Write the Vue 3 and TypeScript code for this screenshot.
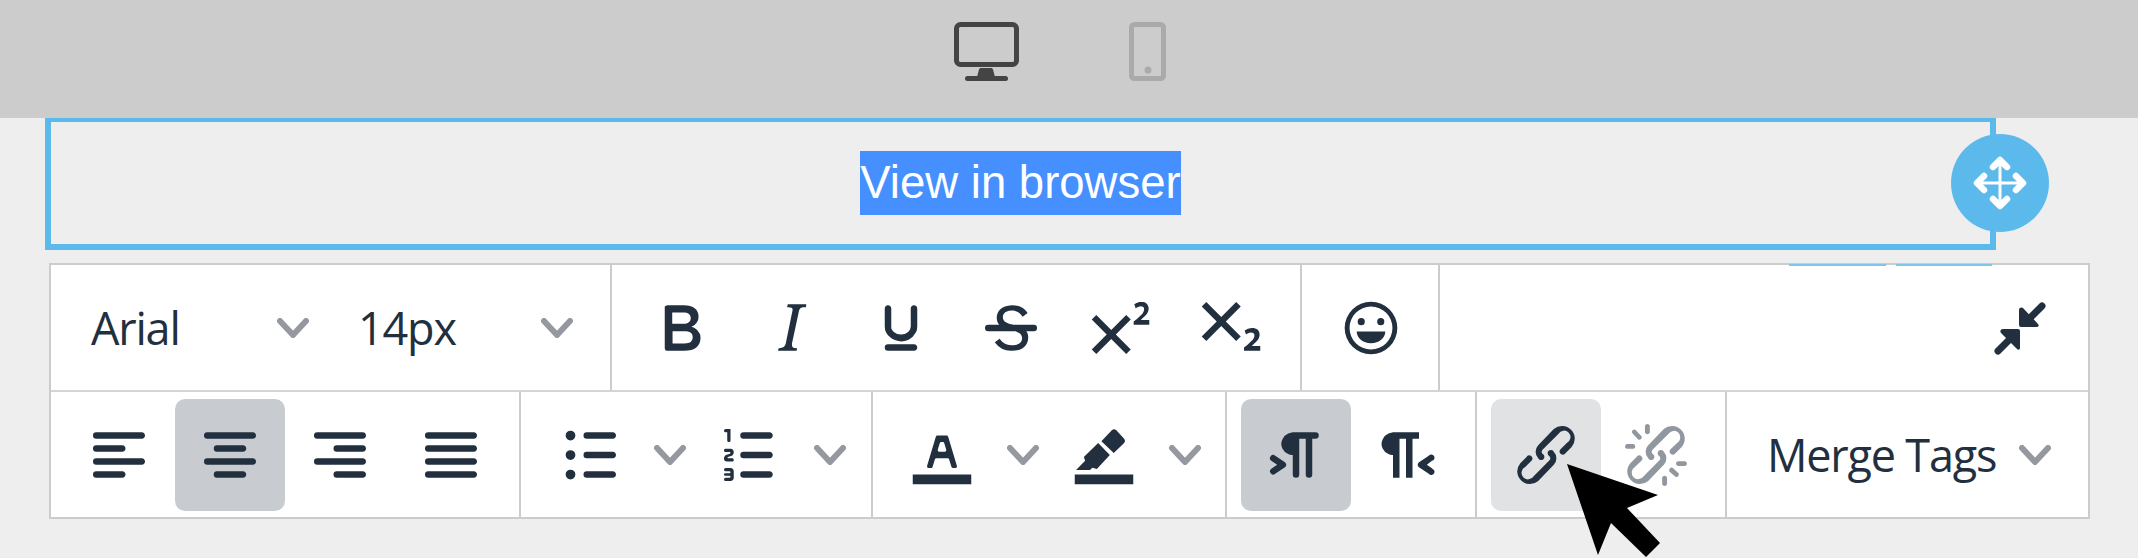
<template>
  <div class="page">
    <!-- Device switcher -->
    <div class="topbar">
      <svg class="device" width="65" height="59" viewBox="0 0 65 59" fill="#444">
        <rect x="2.500" y="2.500" width="60" height="40" rx="4" fill="none" stroke="#444" stroke-width="5" />
        <path d="M27 46h10c1 0 1.500.5 2 1.500l2 7.500H23l2-7.500c.5-1 1-1.500 2-1.500z" />
        <rect x="11" y="54" width="43" height="5" rx="2.500" />
      </svg>
      <svg class="device" width="37" height="59" viewBox="0 0 37 59">
        <rect x="2.500" y="2.500" width="32" height="54" rx="3" fill="none" stroke="#aaa" stroke-width="5" />
        <circle cx="19" cy="48" r="3.500" fill="#aaa" />
      </svg>
    </div>

    <!-- Selected block -->
    <div class="block">
      <span class="selected-text">View in browser</span>
      <div class="handle">
        <svg width="54" height="54" viewBox="0 0 54 54" fill="none" stroke="#fff" stroke-linecap="round" stroke-linejoin="round">
          <path d="M27 5v44M5 27h44" stroke-width="3" />
          <path d="M20 11l7-7 7 7M20 43l7 7 7-7M11 20l-7 7 7 7M43 20l7 7-7 7" stroke-width="6.500" />
        </svg>
      </div>
    </div>

    <!-- Editor toolbar -->
    <div class="toolbar">
      <div class="row">
        <div class="group">
          <div class="select font-select">
            <span>Arial</span>
            <svg class="chevron" viewBox="0 0 32 20"><path d="M3 3l13 14L29 3" /></svg>
          </div>
          <div class="select size-select">
            <span>14px</span>
            <svg class="chevron" viewBox="0 0 32 20"><path d="M3 3l13 14L29 3" /></svg>
          </div>
        </div>
        <div class="group">
          <div v-for="name in formatIcons" :key="name" class="btn">
            <svg class="icon" viewBox="0 0 24 24"><path :d="icons[name]" /></svg>
          </div>
        </div>
        <div class="group emoji-group">
          <div class="btn">
            <svg class="icon" viewBox="0 0 24 24"><path fill-rule="evenodd" :d="icons.emoji" /></svg>
          </div>
        </div>
        <div class="group group-last group-end">
          <span class="ghost-line ghost-a"></span>
          <span class="ghost-line ghost-b"></span>
          <div class="btn">
            <svg class="icon" viewBox="0 0 78 78">
              <path d="M48 29l12-12" stroke="#222f3e" stroke-width="7" stroke-linecap="round" />
              <path d="M37 21v15a2 2 0 0 0 2 2h16c2 0 2-2 1-3L41 19c-1-1-4-1-4 2z" />
              <path d="M29 49L16 62" stroke="#222f3e" stroke-width="7" stroke-linecap="round" />
              <path d="M21 40h15a2 2 0 0 1 2 2v17c0 2-2 2-3 1L19 44c-1-1-1-4 2-4z" />
            </svg>
          </div>
        </div>
      </div>

      <div class="row">
        <div class="group align-group">
          <div v-for="item in alignItems" :key="item.name" class="btn btn-wide" :class="{ active: item.active }">
            <svg class="icon" viewBox="0 0 24 24"><path :d="icons[item.name]" /></svg>
          </div>
        </div>
        <div class="group list-group">
          <div v-for="name in listIcons" :key="name" class="split">
            <div class="btn">
              <svg class="icon" viewBox="0 0 24 24"><path :d="icons[name]" /></svg>
            </div>
            <div class="split-arrow">
              <svg class="chevron" viewBox="0 0 32 20"><path d="M3 3l13 14L29 3" /></svg>
            </div>
          </div>
        </div>
        <div class="group">
          <div v-for="name in colorIcons" :key="name" class="split">
            <div class="btn">
              <svg class="icon" viewBox="0 0 24 24"><path :d="icons[name]" /></svg>
            </div>
            <div class="split-arrow wide-arrow">
              <svg class="chevron" viewBox="0 0 32 20"><path d="M3 3l13 14L29 3" /></svg>
            </div>
          </div>
        </div>
        <div class="group">
          <div class="btn active">
            <svg class="icon" viewBox="0 0 24 24"><path :d="icons.ltr" /></svg>
          </div>
          <div class="btn">
            <svg class="icon" viewBox="0 0 24 24"><path :d="icons.rtl" /></svg>
          </div>
        </div>
        <div class="group">
          <div class="btn hovered">
            <svg class="icon" viewBox="0 0 24 24"><path :d="icons.link" /></svg>
          </div>
          <div class="btn disabled">
            <svg class="icon" viewBox="0 0 24 24"><path :d="icons.unlink" /></svg>
          </div>
        </div>
        <div class="group group-last">
          <div class="select merge-select">
            <span>Merge Tags</span>
            <svg class="chevron" viewBox="0 0 32 20"><path d="M3 3l13 14L29 3" /></svg>
          </div>
        </div>
      </div>
    </div>

    <svg class="cursor" width="100" height="100" viewBox="0 0 100 100">
      <path d="M2 2L93 33L62 46L95 81L81 95L46 61L33 93z" fill="#000" />
    </svg>
  </div>
</template>

<script setup lang="ts">
const icons: Record<string, string> = {
  bold: 'M7.8 19c-.3 0-.5 0-.6-.2l-.2-.5V5.700c0-.2 0-.4.2-.5l.6-.2h5c1.500 0 2.700.3 3.500 1 .7.6 1.100 1.400 1.100 2.500a3 3 0 0 1-.6 1.900c-.4.6-1 1-1.600 1.200.4.1.9.3 1.300.6s.8.7 1 1.200c.4.4.5 1 .5 1.600 0 1.300-.4 2.300-1.300 3-.8.7-2.100 1-3.800 1H7.800zm5-8.300c.6 0 1.200-.1 1.600-.5.4-.3.6-.7.6-1.300 0-1.100-.8-1.700-2.300-1.700H9.300v3.500h3.400zm.5 6c.7 0 1.300-.1 1.700-.4.4-.4.6-.9.6-1.500s-.2-1-.7-1.400c-.4-.3-1-.4-2-.4H9.400v3.800h4z',
  italic: 'M16.700 4.700l-.1.9h-.3c-.6 0-1 0-1.400.3-.3.3-.4.6-.5 1.100l-2.100 9.800v.6c0 .5.4.8 1.400.8h.2l-.2.8H8l.2-.8h.2c1.100 0 1.800-.5 2-1.500l2-9.800.1-.5c0-.6-.4-.8-1.400-.8h-.3l.2-.9h5.800z',
  underline: 'M16 5c.6 0 1 .4 1 1v5.500a4 4 0 0 1-.4 1.800l-1 1.400a5.300 5.300 0 0 1-5.500 1 5 5 0 0 1-1.600-1c-.5-.4-.8-.9-1.100-1.400a4 4 0 0 1-.4-1.800V6c0-.6.4-1 1-1s1 .4 1 1v5.500c0 .3 0 .6.2 1l.6.7a3.300 3.300 0 0 0 2.200.8 3.400 3.400 0 0 0 2.200-.8c.3-.2.4-.5.6-.8l.2-.9V6c0-.6.400-1 1-1zM8 17h8c.6 0 1 .4 1 1s-.4 1-1 1H8a1 1 0 0 1 0-2z',
  strike: 'M15.600 8.500c-.5-.7-1-1.100-1.300-1.300-.6-.4-1.300-.6-2-.6-2.700 0-2.800 1.700-2.800 2.100 0 1.600 1.800 2 3.200 2.300 4.400.9 4.600 2.800 4.600 3.900 0 1.400-.7 4.100-5 4.100A6.200 6.200 0 0 1 7 16.400l1.500-1.100c.4.6 1.600 2 3.700 2 1.600 0 2.500-.4 3-1.200.4-.8.3-2-.8-2.600-.7-.4-1.600-.7-2.900-1-1-.2-3.900-.8-3.900-3.600C7.600 6 10.300 5 12.400 5c2.900 0 4.200 1.600 4.700 2.400l-1.500 1.100zM5 11h14a1 1 0 0 1 0 2H5a1 1 0 0 1 0-2z',
  superscript: 'M15 9.400L10.400 14l4.600 4.600-1.400 1.400L9 15.400 4.400 20 3 18.600 7.600 14 3 9.400 4.400 8 9 12.600 13.600 8 15 9.400zm5.900 1.600h-5v-1l1-.8 1.700-1.600c.3-.5.5-.9.5-1.300 0-.3 0-.5-.2-.7-.2-.2-.5-.3-.9-.3l-.8.2-.7.4-.4-1.200c.2-.2.5-.4 1-.5.3-.2.8-.2 1.200-.2.7 0 1.200.1 1.600.5.4.4.6.9.6 1.500s-.2 1.100-.5 1.600a8 8 0 0 1-1.300 1.300l-.6.6h2.600v1.500z',
  subscript: 'M10.400 10l4.600 4.600-1.400 1.400L9 11.400 4.400 16 3 14.600 7.600 10 3 5.400 4.400 4 9 8.600 13.600 4 15 5.400 10.400 10zM21 19h-5v-1l1-.8 1.700-1.600c.3-.4.5-.8.5-1.200 0-.3 0-.6-.2-.7-.2-.2-.5-.3-.9-.3a2 2 0 0 0-.8.2l-.7.3-.4-1.100 1-.6 1.200-.2c.8 0 1.400.2 1.800.5.4.4.6.9.6 1.500s-.2 1.100-.5 1.600a8 8 0 0 1-1.300 1.300l-.6.6h2.600V19z',
  emoji: 'M12 3.900a8.100 8.100 0 1 0 0 16.200 8.100 8.100 0 0 0 0-16.200zm0 1.500a6.600 6.600 0 1 1 0 13.200 6.600 6.600 0 0 1 0-13.200zM9 8.950a1.100 1.100 0 1 0 0 2.200 1.100 1.100 0 0 0 0-2.200zm6 0a1.100 1.100 0 1 0 0 2.200 1.100 1.100 0 0 0 0-2.200zM7.600 13.100h8.800c0 2-1.900 3.600-4.400 3.600s-4.400-1.600-4.400-3.600z',
  alignLeft: 'M5 5h14c.6 0 1 .4 1 1s-.4 1-1 1H5a1 1 0 1 1 0-2zm0 4h8c.6 0 1 .4 1 1s-.4 1-1 1H5a1 1 0 1 1 0-2zm0 8h8c.6 0 1 .4 1 1s-.4 1-1 1H5a1 1 0 0 1 0-2zm0-4h14c.6 0 1 .4 1 1s-.4 1-1 1H5a1 1 0 0 1 0-2z',
  alignCenter: 'M5 5h14c.6 0 1 .4 1 1s-.4 1-1 1H5a1 1 0 1 1 0-2zm3 4h8c.6 0 1 .4 1 1s-.4 1-1 1H8a1 1 0 1 1 0-2zm0 8h8c.6 0 1 .4 1 1s-.4 1-1 1H8a1 1 0 0 1 0-2zm-3-4h14c.6 0 1 .4 1 1s-.4 1-1 1H5a1 1 0 0 1 0-2z',
  alignRight: 'M5 5h14c.6 0 1 .4 1 1s-.4 1-1 1H5a1 1 0 1 1 0-2zm6 4h8c.6 0 1 .4 1 1s-.4 1-1 1h-8a1 1 0 0 1 0-2zm0 8h8c.6 0 1 .4 1 1s-.4 1-1 1h-8a1 1 0 0 1 0-2zm-6-4h14c.6 0 1 .4 1 1s-.4 1-1 1H5a1 1 0 0 1 0-2z',
  justify: 'M5 5h14c.6 0 1 .4 1 1s-.4 1-1 1H5a1 1 0 1 1 0-2zm0 4h14c.6 0 1 .4 1 1s-.4 1-1 1H5a1 1 0 1 1 0-2zm0 4h14c.6 0 1 .4 1 1s-.4 1-1 1H5a1 1 0 0 1 0-2zm0 4h14c.6 0 1 .4 1 1s-.4 1-1 1H5a1 1 0 0 1 0-2z',
  bullets: 'M11 5h8c.6 0 1 .4 1 1s-.4 1-1 1h-8a1 1 0 0 1 0-2zm0 6h8c.6 0 1 .4 1 1s-.4 1-1 1h-8a1 1 0 0 1 0-2zm0 6h8c.6 0 1 .4 1 1s-.4 1-1 1h-8a1 1 0 0 1 0-2zM4.500 6a1.500 1.500 0 1 0 3 0 1.500 1.500 0 1 0-3 0zm0 6a1.500 1.500 0 1 0 3 0 1.500 1.500 0 1 0-3 0zm0 6a1.500 1.500 0 1 0 3 0 1.500 1.500 0 1 0-3 0z',
  numbers: 'M10 17h8c.6 0 1 .4 1 1s-.4 1-1 1h-8a1 1 0 0 1 0-2zm0-6h8c.6 0 1 .4 1 1s-.4 1-1 1h-8a1 1 0 0 1 0-2zm0-6h8c.6 0 1 .4 1 1s-.4 1-1 1h-8a1 1 0 1 1 0-2zM6 4v3.500c0 .3-.2.5-.5.5a.5.5 0 0 1-.5-.5V5h-.5a.5.5 0 0 1 0-1H6zm-1 8.800l.2.2h1.300c.3 0 .5.2.5.5s-.2.5-.5.5H4.900a.9.9 0 0 1-.9-.9V13c0-.4.3-.8.6-1l1.200-.4.2-.3a.2.2 0 0 0-.2-.2H4.500a.5.5 0 0 1-.5-.5c0-.3.2-.5.5-.5h1.600c.5 0 .9.4.9 1v.1c0 .4-.3.8-.6 1l-1.200.4-.2.3zM7 17v2c0 .6-.4 1-1 1H4.500a.5.5 0 0 1 0-1h1.200c.2 0 .3-.1.3-.3 0-.2-.1-.3-.3-.3H4.400a.4.4 0 1 1 0-.8h1.300c.2 0 .3-.1.3-.3 0-.2-.1-.3-.3-.3H4.500a.5.5 0 1 1 0-1H6c.6 0 1 .4 1 1z',
  textColor: 'M3 18h18v3H3zM8.700 16h-.8a.5.5 0 0 1-.5-.6l2.700-9c.1-.3.3-.4.5-.4h2.800c.2 0 .4.1.5.4l2.700 9a.5.5 0 0 1-.5.6h-.8a.5.5 0 0 1-.4-.4l-.7-2.200c0-.3-.3-.4-.5-.4h-3.400c-.2 0-.4.1-.5.4l-.7 2.200c0 .3-.2.4-.4.4zm2.600-7.600l-.6 2a.5.5 0 0 0 .5.6h1.600a.5.5 0 0 0 .5-.6l-.6-2c0-.3-.3-.4-.5-.4h-.4c-.2 0-.4.1-.5.4z',
  highlight: 'M3 18h18v3H3zM14.400 4.400a1 1 0 0 1 1.400 0L18.200 7a1 1 0 0 1 0 1.300L15 11.400l-3.800-3.600zM10.200 8.300L13.800 12l-4 4.300-1.400-.4-.7.7H3.400l2.800-2.800-.4-1.200z',
  ltr: 'M11 5h7a1 1 0 0 1 0 2h-1v11a1 1 0 0 1-2 0V7h-2v11a1 1 0 0 1-2 0v-6c-.5 0-1 0-1.400-.3A3.400 3.400 0 0 1 7.800 10a3.300 3.300 0 0 1 0-2.800 3.400 3.400 0 0 1 1.800-1.800L11 5zM4.400 16.200L6.200 15l-1.800-1.200a1 1 0 0 1 1.200-1.600l3 2a1 1 0 0 1 0 1.600l-3 2a1 1 0 1 1-1.200-1.600z',
  rtl: 'M8 5h8v2h-2v12h-2V7h-2v12H8v-7c-.5 0-1 0-1.400-.3A3.400 3.400 0 0 1 4.800 10a3.300 3.300 0 0 1 0-2.800 3.400 3.400 0 0 1 1.800-1.800L8 5zm12 11.200a1 1 0 1 1-1 1.600l-3-2a1 1 0 0 1 0-1.600l3-2a1 1 0 1 1 1 1.600L18.400 15l1.800 1.200z',
  link: 'M6.200 12.300a1 1 0 0 1 1.400 1.400l-2 2a2 2 0 1 0 2.600 2.800l4.800-4.800a1 1 0 0 0 0-1.400 1 1 0 1 1 1.400-1.300 2.900 2.900 0 0 1 0 4L9.600 20a3.900 3.900 0 0 1-5.500-5.500l2-2zm11.600-.6a1 1 0 0 1-1.400-1.400l2-2a2 2 0 1 0-2.600-2.800L11 10.300a1 1 0 0 0 0 1.400A1 1 0 1 1 9.600 13a2.900 2.900 0 0 1 0-4L14.400 4a3.900 3.900 0 0 1 5.500 5.500l-2 2z',
  unlink: 'M6.200 12.300a1 1 0 0 1 1.400 1.400l-2.100 2a2 2 0 1 0 2.700 2.800l4.800-4.800a1 1 0 0 0 0-1.400 1 1 0 1 1 1.400-1.300 2.900 2.900 0 0 1 0 4L9.600 20a3.900 3.900 0 0 1-5.500-5.500l2-2zm11.600-.6a1 1 0 0 1-1.400-1.400l2.100-2a2 2 0 1 0-2.700-2.800L11 10.300a1 1 0 0 0 0 1.400A1 1 0 1 1 9.600 13a2.900 2.900 0 0 1 0-4L14.400 4a3.900 3.900 0 0 1 5.500 5.500l-2 2zM7.600 6.300a.8.800 0 0 1-1 1L4.800 5.400a.7.700 0 1 1 1-1l1.800 1.900zM5.100 8.600a.8.800 0 0 1 0 1.500H3a.8.800 0 0 1 0-1.500h2zm5-3.500a.8.800 0 0 1-1.500 0V3a.8.800 0 0 1 1.500 0v2zm6 11.800a.8.800 0 0 1 1-1l1.900 1.800a.8.800 0 0 1-1 1L16 17zm-2.200 2a.8.800 0 0 1 1.500 0V21a.8.800 0 0 1-1.500 0v-2zm5-3.500a.7.700 0 1 1 0-1.500H21a.8.800 0 0 1 0 1.500h-2.100z'
}

const formatIcons = ['bold', 'italic', 'underline', 'strike', 'superscript', 'subscript']
const alignItems = [
  { name: 'alignLeft', active: false },
  { name: 'alignCenter', active: true },
  { name: 'alignRight', active: false },
  { name: 'justify', active: false }
]
const listIcons = ['bullets', 'numbers']
const colorIcons = ['textColor', 'highlight']
</script>

<style>
html,
body {
  margin: 0;
  background: #eee;
}
</style>

<style scoped>
.page {
  position: relative;
  width: 2138px;
  height: 558px;
  overflow: hidden;
  background: #eee;
  font-family: "Open Sans", sans-serif;
  color: #222f3e;
}

.topbar {
  display: flex;
  justify-content: center;
  align-items: flex-start;
  gap: 110px;
  height: 118px;
  padding: 22px 18px 0 0;
  box-sizing: border-box;
  background: #ccc;
}

.block {
  position: relative;
  display: flex;
  justify-content: center;
  align-items: center;
  width: 1951px;
  height: 132px;
  margin-left: 45px;
  box-sizing: border-box;
  border: 6px solid #5cb9ec;
  border-top-width: 4px;
}

.selected-text {
  padding: 6px 0 7px;
  background: #458fff;
  color: #fff;
  font-family: "Liberation Sans", Arial, sans-serif;
  font-size: 45.500px;
  line-height: 51px;
  white-space: nowrap;
}

.handle {
  position: absolute;
  top: 12px;
  right: -59px;
  display: flex;
  justify-content: center;
  align-items: center;
  width: 98px;
  height: 98px;
  border-radius: 50%;
  background: #5cb9ec;
}

.toolbar {
  width: 2041px;
  margin: 13px 0 0 49px;
  box-sizing: border-box;
  border: 2px solid #ccc;
  background: #fff;
}

.row {
  display: flex;
  height: 125px;
  border-bottom: 2px solid #d4d4d4;
}

.row:last-child {
  border-bottom: 0;
}

.group {
  position: relative;
  display: flex;
  align-items: center;
  flex: none;
  padding: 0 14px;
  border-right: 2px solid #ccc;
}

.emoji-group {
  padding-right: 12px;
}

.align-group {
  padding: 0 13px;
}

.list-group {
  padding-right: 16px;
}

.group-last {
  flex: 1;
  border-right: 0;
}

.group-end {
  justify-content: flex-end;
  padding-right: 12px;
}

.btn {
  display: flex;
  justify-content: center;
  align-items: center;
  flex: none;
  width: 110px;
  height: 112px;
  border-radius: 10px;
}

.btn-wide {
  width: 110.500px;
}

.active {
  background: #c8ccd1;
}

.hovered {
  background: #e0e2e4;
}

.disabled .icon {
  fill: rgba(34, 47, 62, 0.5);
}

.icon {
  width: 78px;
  height: 78px;
  fill: #222f3e;
}

.chevron {
  flex: none;
  width: 32px;
  height: 20px;
  fill: none;
  stroke: #95999f;
  stroke-width: 6;
  stroke-linecap: round;
  stroke-linejoin: round;
}

.select {
  display: flex;
  justify-content: space-between;
  align-items: center;
  box-sizing: border-box;
  height: 112px;
  padding: 0 23px 0 26px;
  font-size: 45px;
  letter-spacing: -1.200px;
  white-space: nowrap;
}

.font-select {
  width: 267px;
}

.size-select {
  width: 264px;
}

.merge-select {
  width: 335px;
  padding-right: 25px;
}

.split {
  display: flex;
  align-items: center;
}

.split-arrow {
  display: flex;
  justify-content: center;
  align-items: center;
  width: 50px;
  height: 112px;
}

.wide-arrow {
  width: 52px;
}

.ghost-line {
  position: absolute;
  top: -1px;
  height: 2px;
  background: #7cc5ee;
}

.ghost-a {
  left: 349px;
  width: 97px;
}

.ghost-b {
  left: 456px;
  width: 96px;
}

.cursor {
  position: absolute;
  left: 1565px;
  top: 462px;
}
</style>
